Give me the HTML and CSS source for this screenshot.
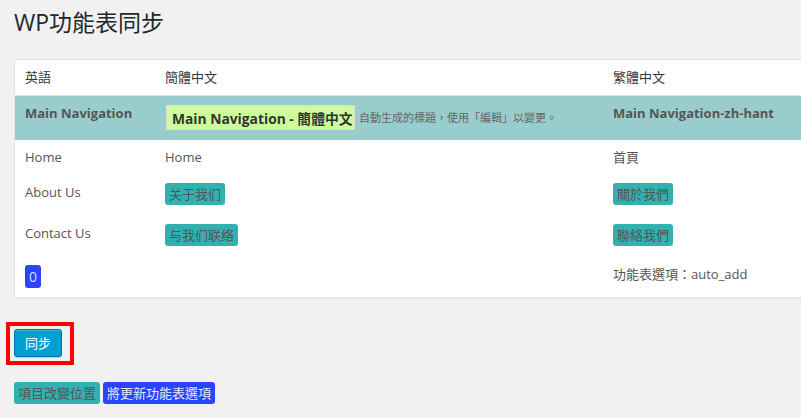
FILE: index.html
```html
<!DOCTYPE html>
<html lang="zh-Hant">
<head>
<meta charset="utf-8">
<title>WP功能表同步</title>
<link rel="stylesheet" href="styles.css">
</head>
<body>
<div class="wrap">
  <h1 class="title">WP功能表同步</h1>
  <div class="card">
    <table class="sync-table">
      <colgroup>
        <col class="c1">
        <col class="c2">
        <col class="c3">
      </colgroup>
      <thead>
        <tr><th>英語</th><th>簡體中文</th><th>繁體中文</th></tr>
      </thead>
      <tbody>
        <tr class="menu-row">
          <td><strong>Main Navigation</strong></td>
          <td><input class="menu-name" type="text" value="Main Navigation - 簡體中文" readonly><span class="desc">自動生成的標題，使用「編輯」以變更。</span></td>
          <td><strong>Main Navigation-zh-hant</strong></td>
        </tr>
        <tr>
          <td>Home</td>
          <td>Home</td>
          <td>首頁</td>
        </tr>
        <tr>
          <td>About Us</td>
          <td><span class="tag tag-teal">关于我们</span></td>
          <td><span class="tag tag-teal">關於我們</span></td>
        </tr>
        <tr>
          <td>Contact Us</td>
          <td><span class="tag tag-teal">与我们联络</span></td>
          <td><span class="tag tag-teal">聯絡我們</span></td>
        </tr>
        <tr class="last-row">
          <td><span class="count">0</span></td>
          <td></td>
          <td>功能表選項：auto_add</td>
        </tr>
      </tbody>
    </table>
  </div>
  <div class="actions">
    <span class="highlight"><button class="button-primary" type="button">同步</button></span>
  </div>
  <div class="legend">
    <span class="tag tag-teal">項目改變位置</span><span class="tag tag-blue">將更新功能表選項</span>
  </div>
</div>
</body>
</html>
```
FILE: styles.css
```css
html, body {
  margin: 0;
  padding: 0;
  overflow: hidden;
}
body {
  background: #f1f1f1;
  color: #555;
  font-family: "Open Sans", "Noto Sans CJK TC", sans-serif;
  font-size: 13px;
  line-height: 19px;
}
.wrap {
  padding-left: 14px;
}
.title {
  margin: 0;
  padding-top: 8px;
  font-size: 23px;
  font-weight: 400;
  line-height: 29px;
  color: #23282d;
}
.card {
  margin-top: 22px;
  width: calc(100% + 20px);
  background: #fff;
  border: 1px solid #e5e5e5;
  box-shadow: 0 1px 1px rgba(0, 0, 0, 0.04);
}
.sync-table {
  width: 100%;
  border-collapse: collapse;
  table-layout: fixed;
}
.c1 { width: 140px; }
.c2 { width: 448px; }
.sync-table th,
.sync-table td {
  padding: 8px 10px;
  text-align: left;
  vertical-align: top;
  font-weight: 400;
  white-space: nowrap;
}
.sync-table thead th {
  border-bottom: 1px solid #e1e1e1;
  color: #32373c;
}
.menu-row td {
  background: #99cccc;
  padding-bottom: 10px;
}
.menu-row strong {
  font-weight: 700;
  color: #555;
}
.menu-name {
  box-sizing: border-box;
  width: 189px;
  height: 25px;
  margin: 1px 0 0 1px;
  padding: 0 1px 0 5px;
  vertical-align: top;
  border: 1px solid #ddd;
  background: #ccff99;
  font-family: "Open Sans", "Noto Sans CJK TC", sans-serif;
  font-size: 13.8px;
  font-weight: 700;
  color: #333;
  outline: none;
}
.desc {
  display: inline-block;
  margin: 1px 0 0 4px;
  vertical-align: top;
  line-height: 25px;
  font-size: 11px;
  color: #666;
}
.tag {
  display: inline-block;
  vertical-align: top;
  height: 22px;
  line-height: 22px;
  padding: 0 4px;
  border-radius: 3px;
  font-size: 13px;
}
.sync-table .tag {
  margin-bottom: 3px;
}
.tag-teal {
  background: #31b2b0;
  color: #555;
}
.tag-blue {
  background: #2b44ff;
  color: #e8e8ff;
}
.count {
  display: inline-block;
  vertical-align: top;
  height: 23px;
  line-height: 23px;
  padding: 0 4px;
  border-radius: 3px;
  background: #2b44ff;
  color: #dde;
  font-size: 14px;
}
.last-row td {
  padding-bottom: 9px;
}
.actions {
  margin-top: 24px;
  margin-left: -8px;
}
.highlight {
  display: inline-block;
  border: 4px solid #ff0000;
  padding: 3px 8px 4px 4px;
}
.button-primary {
  display: block;
  box-sizing: border-box;
  height: 28px;
  margin: 0;
  padding: 0 10px;
  border: 1px solid #0073aa;
  border-radius: 3px;
  background: #00a0d2;
  box-shadow: inset 0 1px 0 rgba(120, 200, 230, 0.5), 0 1px 0 rgba(0, 0, 0, 0.15);
  color: #fff;
  font-family: "Open Sans", "Noto Sans CJK TC", sans-serif;
  font-size: 13px;
  line-height: 26px;
}
.legend {
  margin-top: 17px;
  display: flex;
  gap: 3px;
}
```
